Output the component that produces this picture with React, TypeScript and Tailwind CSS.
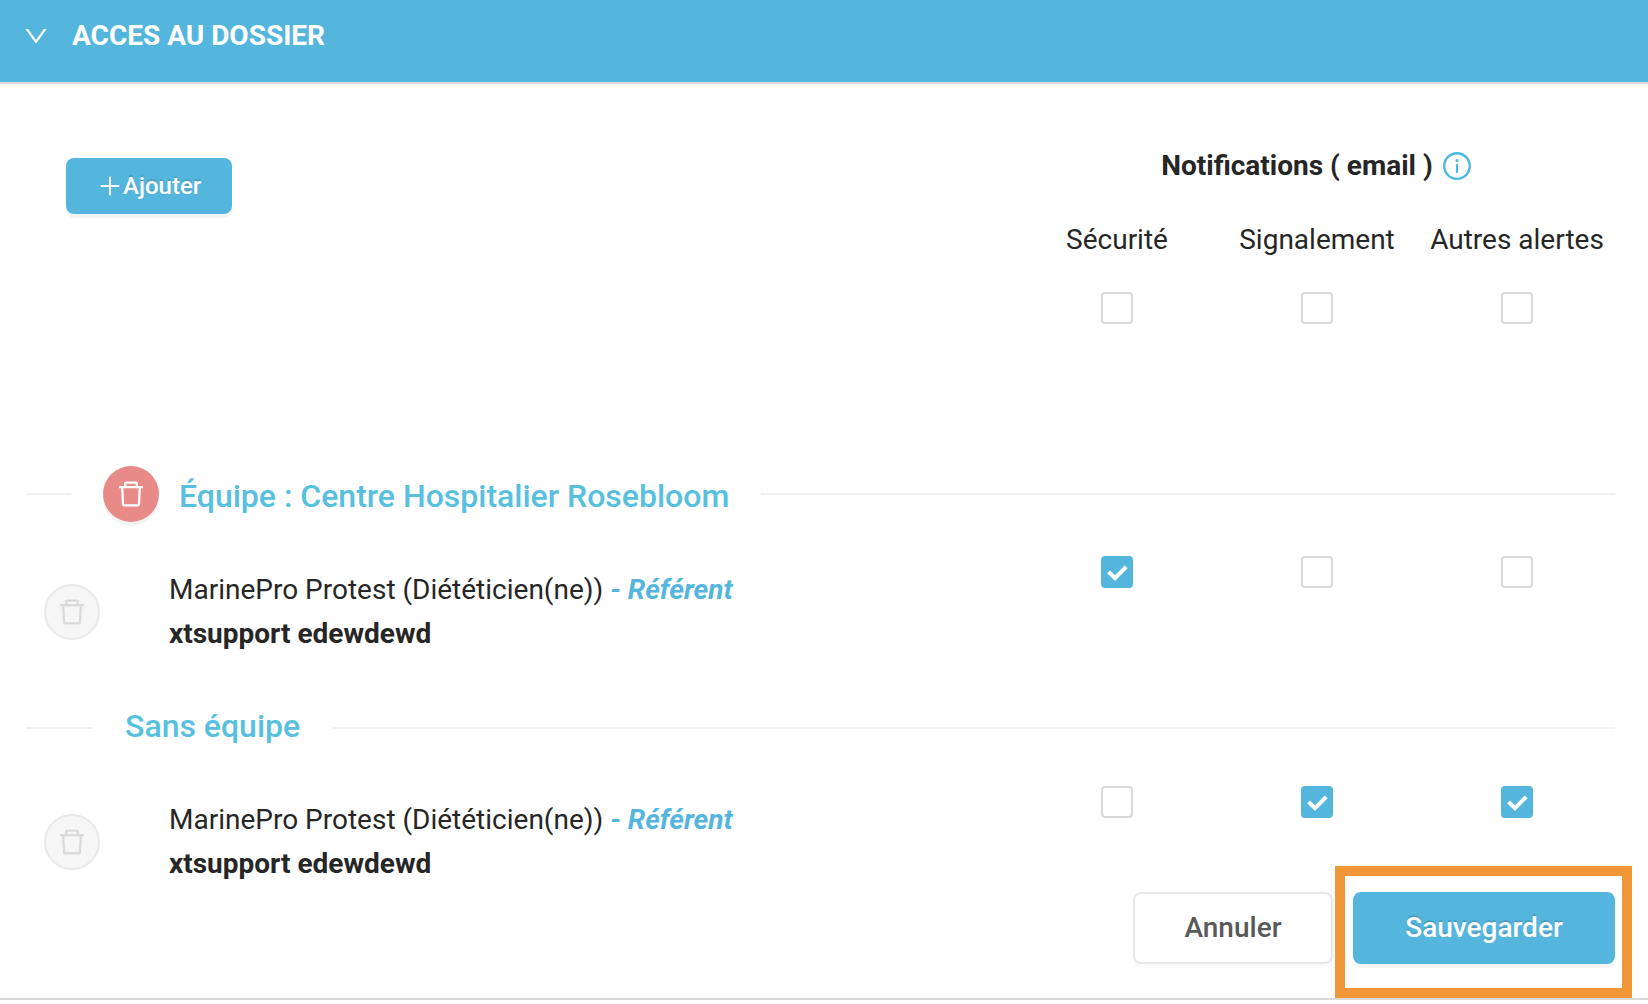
import { useState } from "react";
import {
  AiOutlineDelete,
  AiOutlineDown,
  AiOutlineInfoCircle,
  AiOutlinePlus,
} from "react-icons/ai";

const columns = [
  { id: "securite", label: "Sécurité" },
  { id: "signalement", label: "Signalement" },
  { id: "alertes", label: "Autres alertes" },
];

function Checkbox({ labelledBy, initial = false }: { labelledBy: string; initial?: boolean }) {
  const [checked, setChecked] = useState(initial);
  return (
    <div className="grid size-8 justify-self-center">
      <input
        type="checkbox"
        aria-labelledby={labelledBy}
        checked={checked}
        onChange={(e) => setChecked(e.target.checked)}
        className="col-start-1 row-start-1 size-8 appearance-none rounded border-2 border-[#d9d9d9] bg-white checked:border-[#55b6dd] checked:bg-[#55b6dd]"
      />
      {checked && (
        <svg
          viewBox="0 0 32 32"
          className="pointer-events-none col-start-1 row-start-1 size-8"
          fill="none"
          stroke="white"
          strokeWidth="4"
        >
          <path d="M7.6 15.8 14 22.2 25.2 10.8" />
        </svg>
      )}
    </div>
  );
}

function SectionTitle({
  title,
  removable = false,
}: {
  title: string;
  removable?: boolean;
}) {
  return (
    <div className="flex h-14 items-center gap-8 pr-[33px] pl-[26px]">
      <span className={removable ? "h-0.5 w-[45px] bg-[#f0f0f0]" : "h-0.5 w-[67px] bg-[#f0f0f0]"} />
      <div className="flex items-center gap-5">
        {removable && (
          <button
            type="button"
            aria-label="Supprimer"
            className="flex size-14 items-center justify-center rounded-full bg-[#e88b88] text-[32px] text-white shadow-[0_4px_0_rgba(0,0,0,0.045)]"
          >
            <AiOutlineDelete />
          </button>
        )}
        <h2
          className={`text-[32px] leading-10 font-medium text-[#58c0df] ${removable ? "pt-1" : "pb-1"}`}
        >
          {title}
        </h2>
      </div>
      <span className="h-0.5 flex-1 bg-[#f0f0f0]" />
    </div>
  );
}

function MemberRow({ id, checks }: { id: string; checks: boolean[] }) {
  return (
    <div className="grid grid-cols-[1fr_200px_200px_200px] items-start pr-[31px] pl-11">
      <div className="flex items-center gap-[69px] pt-3">
        <button
          type="button"
          disabled
          aria-label="Supprimer"
          className="flex size-14 items-center justify-center rounded-full border-2 border-[#e8e8e8] bg-[#f6f6f6] text-[32px] text-[#d9d9d9]"
        >
          <AiOutlineDelete />
        </button>
        <div id={id} className="leading-11">
          <p>
            MarinePro Protest (Diététicien(ne)){" "}
            <em className="font-bold text-[#55b6dd]">- Référent</em>
          </p>
          <p className="font-bold">xtsupport edewdewd</p>
        </div>
      </div>
      {columns.map((column, i) => (
        <Checkbox key={column.id} labelledBy={`${id} ${column.id}`} initial={checks[i]} />
      ))}
    </div>
  );
}

export default function App() {
  return (
    <main className="bg-white font-[Roboto,sans-serif] text-[28px] text-[#262626]">
      <header className="border-b-2 border-[#d9d9d9] bg-[#55b6dd] pt-[14px] pb-6 text-white">
        <button type="button" className="flex items-center gap-[22px] pl-[22px] leading-11 font-bold">
          <AiOutlineDown />
          ACCES AU DOSSIER
        </button>
      </header>

      <section className="border-b-2 border-[#d9d9d9] pt-[60px] pb-[34px]">
        <div className="flex items-start justify-between pr-[31px] pl-[66px]">
          <button
            type="button"
            className="mt-[14px] flex h-14 items-center rounded-lg bg-[#55b6dd] px-[31px] text-2xl font-medium text-white shadow-[0_4px_0_rgba(0,0,0,0.045)] [text-shadow:0_-2px_0_rgba(0,0,0,0.12)]"
          >
            <AiOutlinePlus className="size-[26px]" />
            Ajouter
          </button>
          <div className="grid grid-cols-[200px_200px_200px] text-center leading-11">
            <div className="col-span-3 flex items-center justify-center gap-2 font-bold">
              Notifications ( email )
              <AiOutlineInfoCircle className="size-8 text-[#4cb9e3]" />
            </div>
            {columns.map((column) => (
              <div key={column.id} id={column.id} className="my-[30px]">
                {column.label}
              </div>
            ))}
            {columns.map((column) => (
              <Checkbox key={column.id} labelledBy={column.id} />
            ))}
          </div>
        </div>

        <div className="mt-[142px] mb-[34px]">
          <SectionTitle title="Équipe : Centre Hospitalier Rosebloom" removable />
        </div>
        <MemberRow id="membre-equipe" checks={[true, false, false]} />
        <div className="mt-11 mb-[30px]">
          <SectionTitle title="Sans équipe" />
        </div>
        <MemberRow id="membre-sans-equipe" checks={[false, true, true]} />

        <div className="mt-[6px] flex justify-end gap-5 pr-[33px] font-medium">
          <button
            type="button"
            className="h-[72px] w-[200px] rounded-lg border-2 border-[#e8e8e8] bg-white text-[#595959] shadow-[0_4px_0_rgba(0,0,0,0.02)]"
          >
            Annuler
          </button>
          <div className="relative">
            <button
              type="button"
              className="h-[72px] w-[262px] rounded-lg bg-[#55b6dd] text-white shadow-[0_4px_0_rgba(0,0,0,0.045)] [text-shadow:0_-2px_0_rgba(0,0,0,0.12)]"
            >
              Sauvegarder
            </button>
            <div className="pointer-events-none absolute -top-[26px] -right-[17px] -bottom-[34px] -left-[18px] border-[10px] border-[#f19737]" />
          </div>
        </div>
      </section>
    </main>
  );
}
